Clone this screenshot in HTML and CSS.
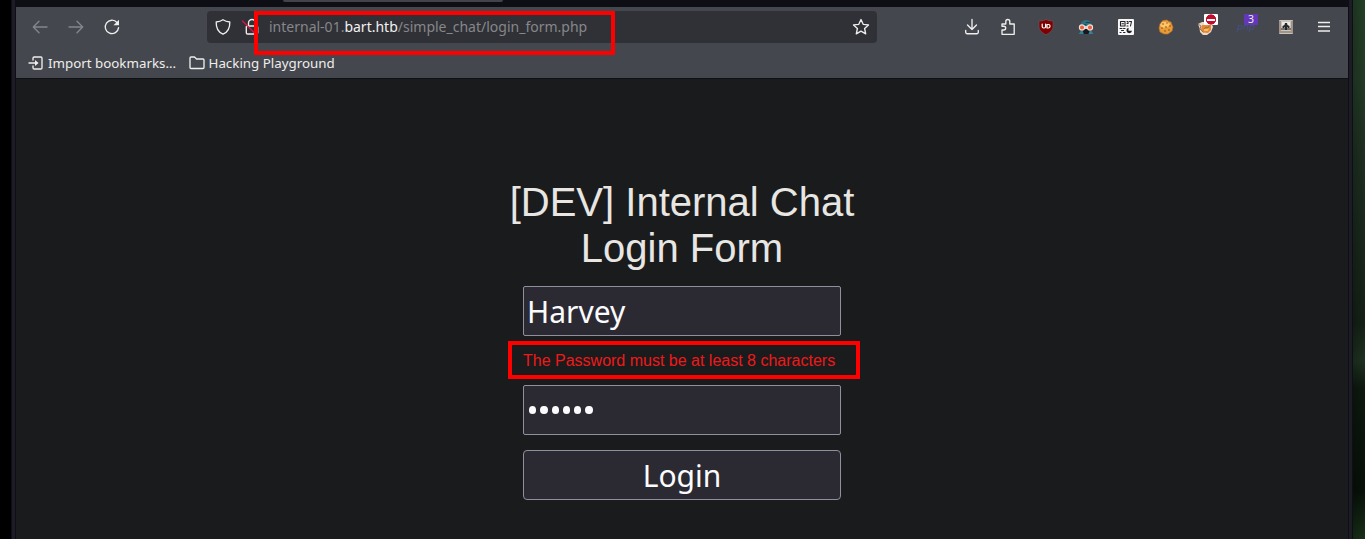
FILE: index.html
```html
<!DOCTYPE html>
<html lang="en">
<head>
<meta charset="utf-8">
<title>Login Form</title>
<link rel="stylesheet" href="styles.css">
</head>
<body>
<div class="desktop">
  <div class="edge edge-left"></div>
  <div class="browser">
    <div class="tabstrip"><div class="active-tab"></div></div>
    <header class="chrome">
      <div class="navbar">
        <div class="nav-buttons">
          <span class="nav-button"><svg class="dim" width="16" height="16" viewBox="0 0 16 16"><path d="M15 8H1.500M7 2.200 1.300 8 7 13.800"/></svg></span>
          <span class="nav-button"><svg class="dim" width="16" height="16" viewBox="0 0 16 16"><path d="M1 8h13.500M9 2.200 14.700 8 9 13.800"/></svg></span>
          <span class="nav-button"><svg width="16" height="16" viewBox="0 0 16 16"><path d="M13 3.500A6.700 6.700 0 1 0 14.600 8.700"/><path class="solid" d="M15 .8V6.300H9.500z"/></svg></span>
        </div>
        <div class="urlbar">
          <svg width="16" height="16" viewBox="0 0 16 16"><path d="M8 .8C6 2.200 3.500 2.800 1.200 3c-.2 5.500 1.500 10 6.800 12.200C13.300 13 15 8.500 14.800 3 12.500 2.800 10 2.200 8 .8z"/></svg>
          <svg class="lock" width="16" height="16" viewBox="0 0 16 16"><path d="M4.500 7V4a3.500 3.500 0 0 1 7 0v3M3.500 7h9a1.200 1.200 0 0 1 1.200 1.200v5.600a1.200 1.200 0 0 1-1.200 1.200h-9a1.200 1.200 0 0 1-1.200-1.200V8.200A1.200 1.200 0 0 1 3.500 7z"/><path class="strike" d="m-1.500 2 13 13"/></svg>
          <span class="url">internal-01.<b>bart.htb</b>/simple_chat/login_form.php</span>
          <svg class="star" width="18" height="18" viewBox="0 0 18 18"><path d="m9 1.500 2.200 4.800 5.300.6-3.900 3.600 1.100 5.300L9 13.200l-4.700 2.600 1.100-5.300L1.500 6.900l5.300-.6z"/></svg>
          <div class="mark mark-url"></div>
        </div>
        <div class="tools">
          <span class="tool wide"><svg width="16" height="18" viewBox="0 0 16 18"><path d="M8 1.500v10M3.500 7 8 11.500 12.500 7M1.700 12.500v1.700a1.500 1.500 0 0 0 1.500 1.500h9.600a1.500 1.500 0 0 0 1.500-1.500v-1.700"/></svg></span>
          <span class="tool slim"><svg width="16" height="18" viewBox="0 0 16 18"><path d="M2 16.300V12h1.800a1.900 1.900 0 0 0 0-3.800H2V6h3.800V3.500a2 2 0 0 1 4 0V6h4.400v10.300z"/></svg></span>
          <span class="tool"><svg class="art" width="16" height="16" viewBox="0 0 16 16"><path fill="#800000" stroke="#695660" stroke-width=".6" d="M8 .4C6 1.700 3.500 2 1 2v5c0 4 2.500 6.500 7 8.700 4.500-2.200 7-4.700 7-8.700V2C12.500 2 10 1.700 8 .4z"/><path fill="none" stroke="#fff" stroke-width="1.200" d="M4.200 5v2.800q0 1.200 1.500 1.200h.6q1.300 0 1.300-1.200V5M9 5.500V9h1.300q1.700 0 1.700-1.800T10.300 5.500z"/></svg></span>
          <span class="tool"><svg class="art" width="16" height="16" viewBox="0 0 16 16"><path fill="#2d6f7e" d="M2.500 7C2.500 3 5 1 8.500 1S13 4 13.500 7z"/><path fill="#164958" d="M8 3h4v1H8zM5 5h3v1H5z"/><path fill="#171820" d="M3 10h10v5H3z"/><path fill="#318296" d="m.8 15 2-3h2l1 3zM10.500 15l1-3h2l1.800 3z"/><path fill="#d9d4cf" d="M6 7h4v3H6z"/><circle cx="4" cy="8.500" r="2.600" fill="#e9603c" stroke="#f2dfd9" stroke-width="1.100"/><circle cx="12" cy="8.500" r="2.600" fill="#e9603c" stroke="#f2dfd9" stroke-width="1.100"/></svg></span>
          <span class="tool"><svg class="art" width="16" height="16" viewBox="0 0 16 16"><rect width="16" height="16" rx="1" fill="#f7f7f7"/><path fill="none" stroke="#252525" stroke-width="1.100" d="M2.500 2.500H7V7H2.500zM4 4.800h1.600M9 2.500h1v2H9M9 7h1M11.500 2.500h2L12.500 7M2 9.500h2M5.500 9.500H7M3.500 11.500h2M2 13.500h1M5.500 13.500H7"/><path fill="#202020" d="M10.500 8.700v3h3.500A2.800 2.800 0 1 1 10.500 8.700z"/></svg></span>
          <span class="tool"><svg class="art" width="16" height="16" viewBox="0 0 16 16"><path fill="#e79c35" stroke="#b97028" stroke-width=".7" d="M5 1.500 9 1l2 1.500 2 .5 1 3 1 2-1 4-4 3H6l-4-2-1-4 1-4z"/><path fill="#ffc466" d="M4 3h5l3 2-2 3-6 1-2-3z"/><g fill="#8a4822"><circle cx="5" cy="5" r=".8"/><circle cx="9" cy="4" r=".7"/><circle cx="4" cy="9" r=".8"/><circle cx="8" cy="8" r=".8"/><circle cx="12" cy="7" r=".8"/><circle cx="7" cy="12" r=".8"/><circle cx="11" cy="11" r=".8"/></g></svg></span>
          <span class="tool"><svg class="art" width="18" height="16" viewBox="0 0 18 16"><path fill="#e9dac8" d="m1 5 4-2h9l2 5-2 5-4 3H6l-3-3-.5-4z"/><path fill="#e7892e" d="M5 6h9v5l-3 3-5-.5-2-3z"/><path fill="none" stroke="#8a6045" stroke-width=".8" d="m1 5 3 2-1 3 3 3M7 10l2-2 2 1 1-2"/><path fill="#f7bd6b" d="M7 10h3l2-1-1 3H7z"/></svg><i class="badge block"></i></span>
          <span class="tool"><span class="php">php</span><b class="badge count">3</b></span>
          <span class="tool"><svg class="art" width="14" height="14" viewBox="0 0 14 14"><rect width="14" height="14" rx="1" fill="#cbc4bc"/><path fill="#a09288" d="M0 1h2v12H0zM12 1h2v12h-2zM2 11h10v2H2z"/><path fill="#eeeae3" d="M3 2h8v7H3z"/><path fill="#77716b" d="M2 8h10v2H2z"/><path fill="#262a2d" d="M6 3h2l.5 2 2 1v2H9l-1-1v3H6V7L5 8H3.500V6l2-1z"/></svg></span>
          <span class="tool slim"><svg class="menu" width="16" height="16" viewBox="0 0 16 16"><path d="M2 3.500h12M2 7.500h12M2 12h12"/></svg></span>
        </div>
      </div>
      <div class="bookmarks">
        <span class="bookmark"><svg width="16" height="16" viewBox="0 0 16 16"><path d="M5 5V3.200Q5 2 6.200 2h6.600Q14 2 14 3.200v9.600q0 1.200-1.200 1.200H6.200Q5 14 5 12.800V11M1 8H9"/><path class="solid" d="m7 5 3.500 3L7 11z"/></svg>Import bookmarks...</span>
        <span class="bookmark"><svg width="16" height="16" viewBox="0 0 16 16"><path d="M1 12.500V3q0-1 1-1h3.500l2 2H14q1 0 1 1v7.500q0 1-1 1H2q-1 0-1-1z"/></svg>Hacking Playground</span>
      </div>
    </header>
    <main class="page">
      <h1>[DEV] Internal Chat<br>Login Form</h1>
      <form class="login">
        <div class="field">Harvey</div>
        <div class="error">The Password must be at least 8 characters<div class="mark mark-error"></div></div>
        <div class="field password"><i></i><i></i><i></i><i></i><i></i><i></i></div>
        <button type="button" class="submit">Login</button>
      </form>
    </main>
  </div>
  <div class="edge edge-right"></div>
  <div class="wallpaper"></div>
</div>
</body>
</html>
```
FILE: styles.css
```css
* { box-sizing: border-box; }
body { margin: 0; background: #000; overflow: hidden; }
.desktop { display: grid; grid-template-columns: 5px 1332px 5px 12px; height: 539px; padding-left: 11px; }
.edge { background: #1c1b26; border: solid #0e0f14; border-width: 0 1px; }
.browser { display: flex; flex-direction: column; background: #1a1b1d; }
.tabstrip { height: 7px; background: #0e0f14; }
.active-tab { width: 220px; height: 2px; margin-left: 267px; background: #42444b; border-radius: 0 0 3px 3px; }
.chrome { height: 72px; background: #45474e; border-bottom: 1px solid #101115; font-family: "Noto Sans", sans-serif; color: #eeeeec; }
.navbar { display: flex; height: 40px; align-items: center; }
svg { flex: none; fill: none; stroke: #eeeeec; stroke-width: 1.35; stroke-linecap: round; stroke-linejoin: round; overflow: visible; }
.art { stroke: none; }
.dim { stroke: #85868a; }
.menu { stroke-width: 1.3; stroke-linecap: butt; }
.solid { fill: #eeeeec; stroke: none; }
.nav-buttons { display: flex; width: 191px; padding-left: 6px; }
.nav-button { display: grid; place-items: center; width: 36px; height: 32px; }
.urlbar { position: relative; display: flex; align-items: center; width: 670px; height: 32px; padding: 0 7px 0 8px; background: #303136; border-radius: 4px; font-size: 14px; }
.lock { margin-left: 13px; }
.strike { stroke: #d81645; }
.url { margin-left: 9px; color: #86878a; white-space: nowrap; line-height: 20px; }
.url b { color: #f2f2f0; font-weight: 400; }
.star { margin-left: auto; }
.mark { position: absolute; border: 4px solid #f00; }
.mark-url { left: 47px; top: 0; width: 361px; height: 44px; }
.tools { display: flex; margin-left: 76px; }
.tool { position: relative; display: grid; place-items: center; width: 40px; height: 32px; }
.wide { width: 37px; }
.slim { width: 36px; }
.badge { position: absolute; left: 18px; top: 3px; width: 14px; height: 11px; border-radius: 1px; }
.block { background: linear-gradient(#fff, #fff) center / 8px 2px no-repeat, radial-gradient(circle, #c40d2c 0 4.8px, #fff 5.4px); }
.count { background: #6437b8; font-size: 10.500px; line-height: 11px; font-weight: 400; text-align: center; }
.php { color: #454f87; font: italic 9.500px/12px "DejaVu Sans", sans-serif; }
.bookmarks { display: flex; gap: 12.400px; height: 32px; padding-left: 12px; align-items: center; font-size: 13.330px; }
.bookmark { display: flex; gap: 4px; align-items: center; }
.page { flex: 1; padding-top: 100px; color: #e8e6e3; font-family: "Liberation Sans", sans-serif; }
h1 { margin: 0; font-size: 40px; line-height: 46px; font-weight: 400; text-align: center; }
.login { width: 318px; margin: 15px auto 0; }
.field, .submit { display: flex; align-items: center; width: 318px; height: 50px; border: 1px solid #8f8f9d; border-radius: 2px; background: #2b2a33; color: #fbfbfe; font-family: "Noto Sans", sans-serif; font-size: 30px; line-height: 41px; }
.field { padding: 0 3px; }
.error { position: relative; height: 49px; color: #ef1919; font-size: 16px; line-height: 49px; white-space: nowrap; }
.mark-error { left: -15px; top: 5px; width: 352px; height: 38px; }
.password { gap: 4px; padding-left: 5px; }
.password i { width: 7.300px; height: 8px; border-radius: 50%; background: #fbfbfe; }
.submit { justify-content: center; margin-top: 15px; padding: 0; border-radius: 4px; }
.wallpaper { background: linear-gradient(90deg, #0003, transparent), linear-gradient(#234026 0, #233b26 15%, #1d2e20 30%, #142016 60%, #1e3220 67%, #0d190f 72%, #071008 91%, #183018 100%); }
```
